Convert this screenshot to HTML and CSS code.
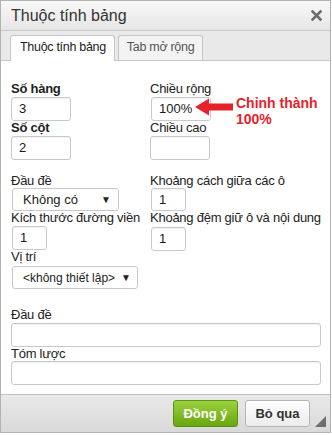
FILE: index.html
```html
<!DOCTYPE html>
<html lang="vi">
<head>
<meta charset="utf-8">
<title>Thuộc tính bảng</title>
<link rel="stylesheet" href="styles.css">
</head>
<body>
<div class="dialog">
  <div class="titlebar">
    <span class="title">Thuộc tính bảng</span>
    <svg class="close" width="11" height="11" viewBox="0 0 11 11"><path d="M1.5 1.5 L9.5 9.5 M9.5 1.5 L1.5 9.5" stroke="#6b6b6b" stroke-width="2.6" stroke-linecap="square"/></svg>
  </div>
  <div class="tabs">
    <div class="tab active">Thuộc tính bảng</div>
    <div class="tab">Tab mở rộng</div>
  </div>
  <div class="content">
    <div class="grid">
      <div class="col">
        <div class="field"><label class="bold">Số hàng</label><div class="input w60">3</div></div>
        <div class="field"><label class="bold">Số cột</label><div class="input w60">2</div></div>
      </div>
      <div class="col">
        <div class="field"><label>Chiều rộng</label><div class="input w60 r1">100%</div></div>
        <div class="field"><label>Chiều cao</label><div class="input w60"></div></div>
      </div>
    </div>
    <div class="grid sec2">
      <div class="col">
        <div class="field"><label>Đầu đề</label><div class="select s1"><span>Không có</span><span class="arr">▼</span></div></div>
        <div class="field"><label>Kích thước đường viền</label><div class="input w35 mt1">1</div></div>
        <div class="field"><label>Vị trí</label><div class="select s2 mt2"><span>&lt;không thiết lập&gt;</span><span class="arr">▼</span></div></div>
      </div>
      <div class="col">
        <div class="field"><label>Khoảng cách giữa các ô</label><div class="input w35 h23">1</div></div>
        <div class="field"><label>Khoảng đệm giữ ô và nội dung</label><div class="input w35 mt2">1</div></div>
      </div>
    </div>
    <div class="sec3">
      <div class="field"><label>Đầu đề</label><div class="input full mt1"></div></div>
      <div class="field"><label>Tóm lược</label><div class="input full"></div></div>
    </div>
    <div class="note">
      <svg class="arrow" width="38" height="18" viewBox="0 0 38 18"><path d="M0 9 L14 0.5 L14 5.5 L38 5.5 L38 12.5 L14 12.5 L14 17.5 Z" fill="#e5232b"/></svg>
      <div class="notetext">Chỉnh thành<br>100%</div>
    </div>
  </div>
  <div class="footer">
    <div class="btn ok">Đồng ý</div>
    <div class="btn cancel">Bỏ qua</div>
    <svg class="grip" width="11" height="11" viewBox="0 0 11 11"><path d="M11 0 L11 11 L0 11 Z" fill="#6e6e6e"/></svg>
  </div>
</div>
</body>
</html>
```
FILE: styles.css
```css
* { box-sizing: border-box; }
body {
  margin: 0;
  background: #fff;
  font-family: "Liberation Sans", Arial, sans-serif;
  font-size: 13px;
  color: #222;
}
.dialog {
  width: 331px;
  height: 433px;
  border: 1px solid #b2b2b2;
  display: flex;
  flex-direction: column;
  position: relative;
}
.titlebar {
  height: 30px;
  flex: none;
  background: linear-gradient(#f8f8f8, #e6e6e6);
  border-bottom: 1px solid #c6c6c6;
  display: flex;
  align-items: center;
  justify-content: space-between;
  padding: 0 7px 0 10px;
}
.title {
  font-size: 16px;
  color: #333;
  margin-top: 1px;
}
.close { margin-right: 1px; }
.tabs {
  height: 30px;
  flex: none;
  background: #e9e9e9;
  border-bottom: 1px solid #c6c6c6;
  display: flex;
  align-items: flex-end;
  gap: 3px;
  padding-left: 9px;
}
.tab {
  height: 25px;
  padding: 0 8px;
  border: 1px solid #c6c6c6;
  border-bottom: none;
  border-radius: 3px 3px 0 0;
  background: #f3f3f3;
  color: #555;
  line-height: 23px;
  font-size: 12.5px;
  white-space: nowrap;
  letter-spacing: -0.3px;
}
.tab.active {
  background: #fff;
  color: #222;
  height: 26px;
  margin-bottom: -1px;
  padding: 0 8px 0 9px;
}
.content {
  flex: 1;
  background: #fff;
  padding: 21px 10px 0 10px;
  position: relative;
}
.grid {
  display: grid;
  grid-template-columns: 139px 1fr;
}
.sec2 { margin-top: 14px; }
.sec3 { margin-top: 19px; }
.field label {
  display: block;
  line-height: 14px;
  height: 14px;
  color: #222;
  white-space: nowrap;
  letter-spacing: -0.25px;
}
.field label.bold { font-weight: bold; }
.input {
  height: 24px;
  border: 1px solid #c9c9c9;
  border-radius: 3px;
  background: #fff;
  box-shadow: inset 0 1px 1px rgba(0,0,0,0.06);
  padding-left: 7px;
  line-height: 22px;
  color: #1a1a1a;
}
.w60 { width: 60px; margin-top: 1px; }
.w60.r1 { margin-left: 1px; }
.w35 { width: 35px; margin-left: 1px; }
.h23 { height: 23px; }
.full { width: 310px; }
.mt1 { margin-top: 1px; }
.mt2 { margin-top: 2px; }
.select {
  height: 23px;
  border: 1px solid #c9c9c9;
  border-radius: 3px;
  background: #fff;
  display: flex;
  align-items: center;
  justify-content: space-between;
  margin-left: 1px;
}
.s1 { width: 107px; padding: 0 7px 0 10px; }
.s2 { width: 126px; padding: 0 6px 0 10px; font-size: 12px; }
.arr { font-size: 10px; color: #222; }
.note {
  position: absolute;
  left: 194px;
  top: 34px;
  display: flex;
  align-items: flex-start;
  gap: 3px;
}
.arrow { flex: none; margin-top: 3px; }
.notetext {
  color: #e5232b;
  font-weight: bold;
  font-size: 14px;
  line-height: 16px;
}
.footer {
  height: 38px;
  flex: none;
  border-top: 1px solid #c2c2c2;
  background: linear-gradient(#e9e9e9, #d9d9d9);
  display: flex;
  align-items: flex-start;
  justify-content: flex-end;
  gap: 7px;
  padding: 5px 20px 0 0;
  position: relative;
}
.btn {
  height: 27px;
  width: 65px;
  border-radius: 3px;
  font-weight: bold;
  font-size: 13px;
  line-height: 25px;
  text-align: center;
}
.ok {
  background: linear-gradient(#9bd23f, #69a60f);
  border: 1px solid #5b9310;
  color: #fff;
}
.cancel {
  background: linear-gradient(#ffffff, #ececec);
  border: 1px solid #b4b4b4;
  color: #333;
}
.grip {
  position: absolute;
  right: 4px;
  bottom: 5px;
}
```
